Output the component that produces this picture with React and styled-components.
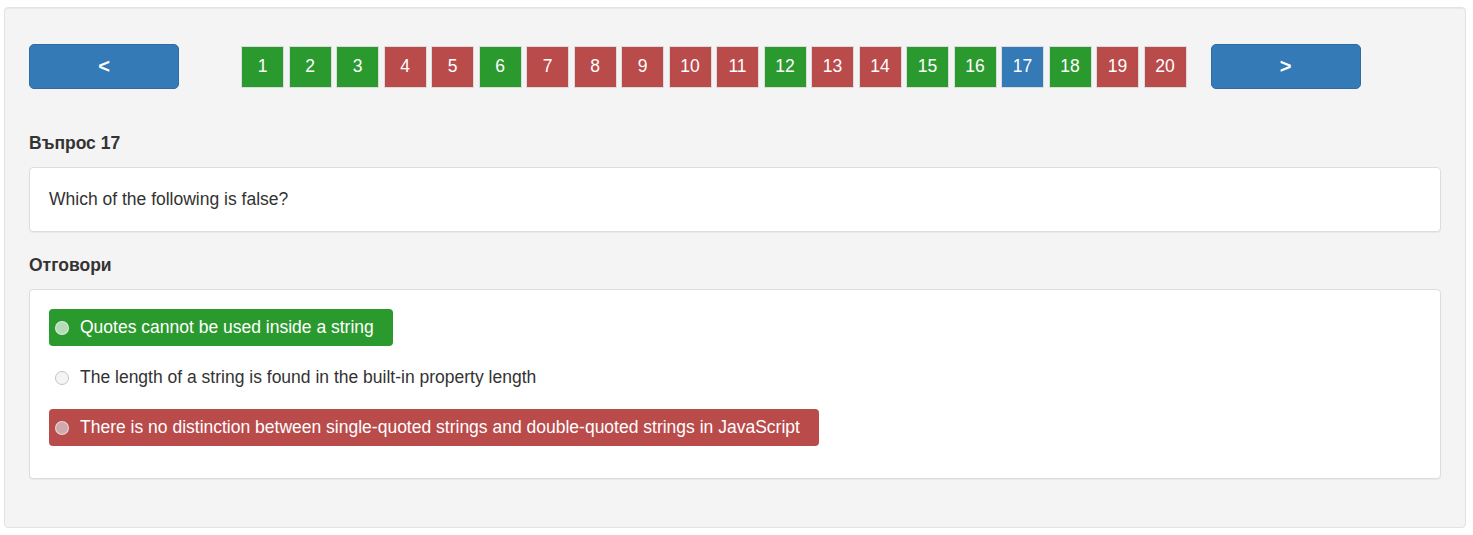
import React from 'react';
import styled, { createGlobalStyle } from 'styled-components';

const GlobalStyle = createGlobalStyle`
  body {
    margin: 0;
    font-family: "Liberation Sans", Arial, sans-serif;
    color: #333;
    background: #fff;
  }
`;

const statuses = ['ok', 'ok', 'ok', 'bad', 'bad', 'ok', 'bad', 'bad', 'bad', 'bad',
  'bad', 'ok', 'bad', 'bad', 'ok', 'ok', 'current', 'ok', 'bad', 'bad'];

const answers = [
  { text: 'Quotes cannot be used inside a string', state: 'ok' },
  { text: 'The length of a string is found in the built-in property length', state: 'none' },
  { text: 'There is no distinction between single-quoted strings and double-quoted strings in JavaScript', state: 'bad' },
];

const App = () => {
  return (
    <Page>
      <GlobalStyle />
      <Well>
        <NavRow>
          <ArrowButton>&lt;</ArrowButton>
          <Numbers>
            {statuses.map((s, i) => (
              <NumberBox key={i} $status={s}>{i + 1}</NumberBox>
            ))}
          </Numbers>
          <ArrowButton $next>&gt;</ArrowButton>
        </NavRow>

        <Label $first>Въпрос 17</Label>
        <Card>
          <QuestionText>Which of the following is false?</QuestionText>
        </Card>

        <Label>Отговори</Label>
        <Card>
          <AnswerList>
            {answers.map((a) => (
              <Answer key={a.text} $state={a.state}>
                <Radio $state={a.state} />
                {a.text}
              </Answer>
            ))}
          </AnswerList>
        </Card>
      </Well>
    </Page>
  );
};

const Page = styled.div`
  padding: 7px 7px 7px 4px;
`;

const Well = styled.div`
  background: #f4f4f4;
  border: 1px solid #e3e3e3;
  border-radius: 4px;
  box-shadow: inset 0 1px 1px rgba(0, 0, 0, 0.05);
  padding: 36px 24px 48px 24px;
`;

const NavRow = styled.div`
  display: flex;
  align-items: center;
  height: 45px;
`;

const ArrowButton = styled.button`
  width: 150px;
  height: 45px;
  margin-left: ${(p) => (p.$next ? '24px' : '0')};
  margin-right: ${(p) => (p.$next ? '0' : '62px')};
  background: #337ab7;
  border: 1px solid #2e6da4;
  border-radius: 5px;
  color: #fff;
  font-family: "Liberation Sans", Arial, sans-serif;
  font-size: 20px;
  font-weight: bold;
  padding: 0;
  cursor: pointer;
`;

const Numbers = styled.div`
  display: flex;
  gap: 4.5px;
`;

const statusColors = {
  ok: '#2a9a2e',
  bad: '#b94b4b',
  current: '#337ab7',
};

const NumberBox = styled.div`
  box-sizing: border-box;
  width: 43px;
  height: 42px;
  display: flex;
  align-items: center;
  justify-content: center;
  background: ${(p) => statusColors[p.$status]};
  border: 1px solid #dcdcdc;
  color: #fff;
  font-size: 17.5px;
`;

const Label = styled.div`
  font-weight: bold;
  font-size: 17.5px;
  line-height: 23px;
  margin-top: ${(p) => (p.$first ? '43px' : '22px')};
  margin-bottom: 12px;
`;

const Card = styled.div`
  background: #fff;
  border: 1px solid #ddd;
  border-radius: 4px;
  box-shadow: 0 1px 1px rgba(0, 0, 0, 0.05);
`;

const QuestionText = styled.div`
  padding: 20px 19px;
  font-size: 17.5px;
  line-height: 23px;
`;

const AnswerList = styled.div`
  display: flex;
  flex-direction: column;
  align-items: flex-start;
  gap: 13px;
  padding: 19px 19px 32px;
`;

const answerBg = {
  ok: '#2a9a2e',
  bad: '#b94b4b',
  none: 'transparent',
};

const Answer = styled.div`
  display: inline-flex;
  align-items: center;
  height: 37px;
  padding: 0 19px 0 6px;
  border-radius: 4px;
  background: ${(p) => answerBg[p.$state]};
  color: ${(p) => (p.$state === 'none' ? '#333' : '#fff')};
  font-size: 17.5px;
`;

const Radio = styled.span`
  box-sizing: border-box;
  width: 14px;
  height: 14px;
  border-radius: 50%;
  margin-right: 11px;
  flex-shrink: 0;
  border: 1px solid ${(p) => (p.$state === 'none' ? '#c4c4c4' : 'rgba(255,255,255,0.55)')};
  background: ${(p) => {
    if (p.$state === 'none') return '#f4f4f4';
    if (p.$state === 'bad') return '#cfaaac';
    return 'rgba(255,255,255,0.65)';
  }};
`;

export default App;
